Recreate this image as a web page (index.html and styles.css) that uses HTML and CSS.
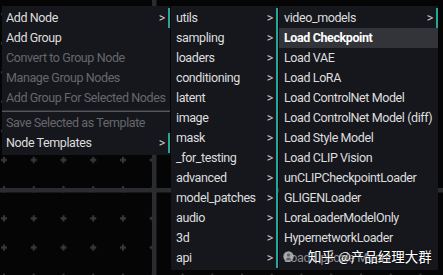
FILE: index.html
```html
<!DOCTYPE html>
<html lang="en">
<head>
  <meta charset="UTF-8" />
  <title>Node menu</title>
  <link rel="stylesheet" href="styles.css">
</head>
<body>
  <!-- canvas grid behind the menus -->
  <svg class="grid" width="443" height="275">
    <defs>
      <pattern id="marks" x="0" y="0" width="29.75" height="29.2" patternUnits="userSpaceOnUse">
        <path d="M1 14h6M4 11v6" stroke="#38393d" stroke-width="2"/>
      </pattern>
    </defs>
    <rect width="443" height="275" fill="url(#marks)"/>
    <rect x="152" y="0" width="4.5" height="275" fill="#2b2c30"/>
    <rect x="0" y="188" width="443" height="4.5" fill="#2b2c30"/>
  </svg>

  <div class="menus">
    <ul class="menu main">
      <li class="sub">Add Node <span class="arrow">&gt;</span></li>
      <li>Add Group</li>
      <li class="off">Convert to Group Node</li>
      <li class="off">Manage Group Nodes</li>
      <li class="off">Add Group For Selected Nodes</li>
      <li class="sep"></li>
      <li class="off">Save Selected as Template</li>
      <li class="sub">Node Templates <span class="arrow">&gt;</span></li>
    </ul>

    <ul class="menu cats">
      <li class="sub">utils <span class="arrow">&gt;</span></li>
      <li class="sub">sampling <span class="arrow">&gt;</span></li>
      <li class="sub">loaders <span class="arrow">&gt;</span></li>
      <li class="sub">conditioning <span class="arrow">&gt;</span></li>
      <li class="sub">latent <span class="arrow">&gt;</span></li>
      <li class="sub">image <span class="arrow">&gt;</span></li>
      <li class="sub">mask <span class="arrow">&gt;</span></li>
      <li class="sub">_for_testing <span class="arrow">&gt;</span></li>
      <li class="sub">advanced <span class="arrow">&gt;</span></li>
      <li class="sub">model_patches <span class="arrow">&gt;</span></li>
      <li class="sub">audio <span class="arrow">&gt;</span></li>
      <li class="sub">3d <span class="arrow">&gt;</span></li>
      <li class="sub">api <span class="arrow">&gt;</span></li>
    </ul>

    <ul class="menu nodes">
      <li class="sub">video_models <span class="arrow">&gt;</span></li>
      <li class="hover">Load Checkpoint</li>
      <li>Load VAE</li>
      <li>Load LoRA</li>
      <li>Load ControlNet Model</li>
      <li>Load ControlNet Model (diff)</li>
      <li>Load Style Model</li>
      <li>Load CLIP Vision</li>
      <li>unCLIPCheckpointLoader</li>
      <li>GLIGENLoader</li>
      <li>LoraLoaderModelOnly</li>
      <li>HypernetworkLoader</li>
      <li class="dim">Load Upscale Model</li>
    </ul>
  </div>

  <!-- watermark -->
  <div class="mark">
    <svg class="mark-icon" width="11" height="11" viewBox="0 0 11 11">
      <circle cx="5.5" cy="5.5" r="5.2" fill="#b9b9bc"/>
      <circle cx="5.5" cy="4" r="1.6" fill="#6d6e73"/>
      <path d="M2.6 9.2c.6-2 1.6-2.8 2.9-2.8s2.3.8 2.9 2.8" fill="#6d6e73"/>
    </svg>
    <span>知乎 @产品经理大群</span>
  </div>
</body>
</html>
```

FILE: styles.css
```css
body {
  margin: 0;
  width: 443px;
  height: 275px;
  overflow: hidden;
  background: #050506;
  font-family: Roboto, "Liberation Sans", sans-serif;
  font-size: 12.5px;
  letter-spacing: -0.4px;
}
.grid { position: absolute; top: 0; left: 0; }

.menus {
  position: absolute;
  top: 6px;
  left: 2px;
  display: flex;
  align-items: flex-start;
}
.menu {
  list-style: none;
  margin: 0;
  padding: 2px 0;
  background: #16171d;
  color: #dedede;
  white-space: nowrap;
  overflow: hidden;
}
.menu.main { width: 168px; }
.menu.cats { width: 107px; margin-left: 1px; }
.menu.nodes { width: 159px; margin-left: 1px; }

.menu li {
  height: 20px;
  line-height: 20px;
  padding: 0 3px 0 5px;
  display: flex;
  justify-content: space-between;
}
.menu.main li { padding-left: 4px; }
.menu li.sub { border-right: 2px solid #26a69a; }
.menu li.off { color: #66676b; }
.menu li.hover { background: #33343a; color: #fff; font-weight: bold; }
.menu li.dim { color: #8a8a8e; }
.menu li.sep {
  height: 0;
  margin: 2px 0 1px;
  border-top: 1px solid #303136;
  border-bottom: 1px solid #55565b;
}
.arrow { color: #c8c8c8; }

.mark {
  position: absolute;
  top: 247px;
  left: 283px;
  display: flex;
  align-items: center;
  gap: 14px;
  color: #fff;
  font-family: "Noto Sans CJK SC", sans-serif;
  font-size: 13.5px;
  letter-spacing: 0;
  line-height: 18px;
  text-shadow: 0 0 2px rgba(0,0,0,0.7);
}
.mark-icon { opacity: 0.85; }
```
